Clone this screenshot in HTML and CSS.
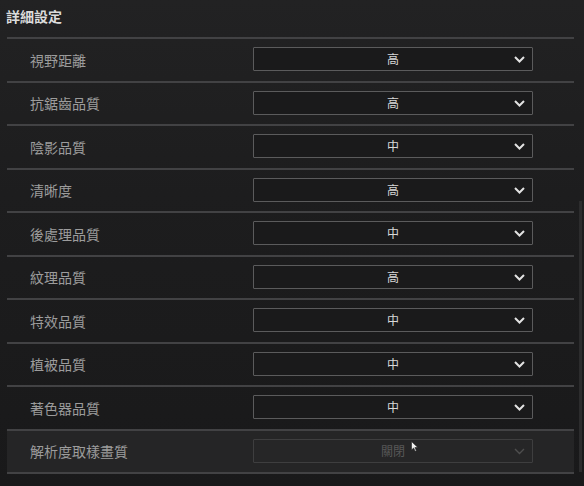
FILE: index.html
```html
<!DOCTYPE html>
<html lang="zh-Hant">
<head>
<meta charset="utf-8">
<title>詳細設定</title>
<link rel="stylesheet" href="styles.css">
</head>
<body>
<div class="page">
  <h1 class="title">詳細設定</h1>
  <div class="list">
    <div class="row"><span class="label">視野距離</span><div class="select"><span class="value">高</span><svg class="chev" width="11" height="7" viewBox="0 0 11 7"><polyline points="1,1 5.5,5.5 10,1"/></svg></div></div>
    <div class="row"><span class="label">抗鋸齒品質</span><div class="select"><span class="value">高</span><svg class="chev" width="11" height="7" viewBox="0 0 11 7"><polyline points="1,1 5.5,5.5 10,1"/></svg></div></div>
    <div class="row"><span class="label">陰影品質</span><div class="select"><span class="value">中</span><svg class="chev" width="11" height="7" viewBox="0 0 11 7"><polyline points="1,1 5.5,5.5 10,1"/></svg></div></div>
    <div class="row"><span class="label">清晰度</span><div class="select"><span class="value">高</span><svg class="chev" width="11" height="7" viewBox="0 0 11 7"><polyline points="1,1 5.5,5.5 10,1"/></svg></div></div>
    <div class="row"><span class="label">後處理品質</span><div class="select"><span class="value">中</span><svg class="chev" width="11" height="7" viewBox="0 0 11 7"><polyline points="1,1 5.5,5.5 10,1"/></svg></div></div>
    <div class="row"><span class="label">紋理品質</span><div class="select"><span class="value">高</span><svg class="chev" width="11" height="7" viewBox="0 0 11 7"><polyline points="1,1 5.5,5.5 10,1"/></svg></div></div>
    <div class="row"><span class="label">特效品質</span><div class="select"><span class="value">中</span><svg class="chev" width="11" height="7" viewBox="0 0 11 7"><polyline points="1,1 5.5,5.5 10,1"/></svg></div></div>
    <div class="row"><span class="label">植被品質</span><div class="select"><span class="value">中</span><svg class="chev" width="11" height="7" viewBox="0 0 11 7"><polyline points="1,1 5.5,5.5 10,1"/></svg></div></div>
    <div class="row"><span class="label">著色器品質</span><div class="select"><span class="value">中</span><svg class="chev" width="11" height="7" viewBox="0 0 11 7"><polyline points="1,1 5.5,5.5 10,1"/></svg></div></div>
    <div class="row row-disabled"><span class="label">解析度取樣畫質</span><div class="select select-disabled"><span class="value">關閉</span><svg class="chev" width="11" height="7" viewBox="0 0 11 7"><polyline points="1,1 5.5,5.5 10,1"/></svg></div></div>
  </div>
  <div class="scrollbar"><div class="thumb"></div></div>
  <svg class="cursor" width="8" height="11" viewBox="0 0 8 11"><path d="M0.5 0.5 L0.5 9 L2.6 7 L4.2 10.3 L5.4 9.7 L3.9 6.5 L6.8 6.5 Z" fill="#f2f2f2" stroke="#222" stroke-width="0.6"/></svg>
</div>
</body>
</html>
```

FILE: styles.css
```css
html, body {
  margin: 0;
  padding: 0;
  background: #1d1d1e;
}
body {
  width: 584px;
  height: 486px;
  overflow: hidden;
  font-family: "Noto Sans CJK TC", "Noto Sans CJK SC", "Noto Sans", sans-serif;
}
.page {
  position: relative;
  width: 584px;
  height: 486px;
  background: linear-gradient(180deg, #222223 0%, #1d1d1e 40%, #19191a 100%);
}
.title {
  margin: 0;
  height: 37px;
  padding-left: 6px;
  box-sizing: border-box;
  font-size: 14px;
  font-weight: 700;
  line-height: 32px;
  color: #dcdcdc;
}
.list {
  margin-left: 7px;
  width: 567px;
  border-bottom: 2px solid #424244;
}
.row {
  display: flex;
  align-items: center;
  height: 43.5px;
  box-sizing: border-box;
  border-top: 2px solid #424244;
}
.row-disabled {
  background: #252526;
}
.label {
  width: 223px;
  padding-left: 23px;
  font-size: 14px;
  color: #9c9c9c;
  line-height: 1;
}
.select {
  position: relative;
  margin-top: -1px;
  display: flex;
  align-items: center;
  justify-content: center;
  width: 280px;
  height: 24px;
  box-sizing: border-box;
  border: 1px solid #5b5b5c;
  border-radius: 1px;
  background: #1a1a1b;
}
.value {
  font-size: 12px;
  color: #d8d8d8;
  line-height: 1;
}
.chev {
  position: absolute;
  right: 7px;
  top: 8px;
}
.chev polyline {
  fill: none;
  stroke: #e2e2e2;
  stroke-width: 2;
}
.select-disabled {
  border-color: #3e3e3f;
  background: #262627;
}
.select-disabled .value {
  color: #585858;
}
.select-disabled .chev polyline {
  stroke: #4e4e4e;
  stroke-width: 1.4;
}
.scrollbar {
  position: absolute;
  left: 579px;
  top: 201px;
  width: 3px;
  height: 271px;
}
.thumb {
  width: 100%;
  height: 100%;
  background: #2c2c2d;
}
.cursor {
  position: absolute;
  left: 411px;
  top: 441px;
}
```
